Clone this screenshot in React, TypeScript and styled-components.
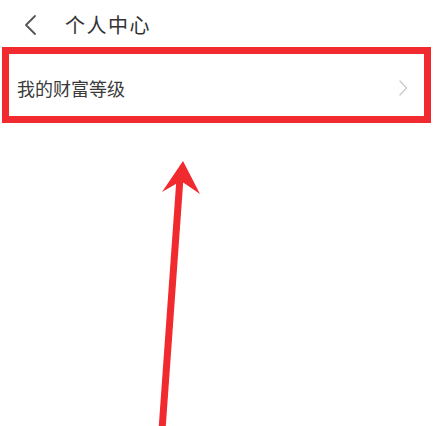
import React from "react";
import styled, { createGlobalStyle } from "styled-components";

const GlobalStyle = createGlobalStyle`
  html, body {
    margin: 0;
    padding: 0;
    background: #ffffff;
  }
  body {
    font-family: "Noto Sans CJK SC", "Noto Sans", sans-serif;
  }
`;

const Page = styled.div`
  position: relative;
  width: 436px;
  height: 426px;
  overflow: hidden;
  background: #ffffff;
`;

const Header = styled.div`
  display: flex;
  align-items: center;
  height: 47px;
  padding: 3px 0 0 24px;
  box-sizing: border-box;
`;

const BackButton = styled.div`
  display: flex;
  align-items: center;
  width: 14px;
  height: 22px;
`;

const Title = styled.div`
  margin-left: 27px;
  font-size: 20px;
  line-height: 24px;
  color: #333333;
  letter-spacing: 1.5px;
`;

const HighlightBox = styled.div`
  margin: 0 5px 0 2px;
  border: 7px solid #f02a2e;
  height: 76px;
  box-sizing: border-box;
  display: flex;
  align-items: center;
  justify-content: space-between;
  padding: 6px 16px 0 8px;
`;

const RowLabel = styled.div`
  font-size: 18px;
  line-height: 22px;
  color: #3a3a3a;
`;

const Chevron = styled.div`
  display: flex;
  align-items: center;
  width: 10px;
  height: 16px;
`;

const ArrowLayer = styled.svg`
  position: absolute;
  left: 0;
  top: 0;
  pointer-events: none;
`;

export default function App() {
  return (
    <>
      <GlobalStyle />
      <Page>
        <Header>
          <BackButton>
            <svg width="14" height="22" viewBox="0 0 14 22">
              <polyline
                points="11,2 2,11 11,20"
                fill="none"
                stroke="#555555"
                strokeWidth="1.8"
                strokeLinecap="round"
                strokeLinejoin="round"
              />
            </svg>
          </BackButton>
          <Title>个人中心</Title>
        </Header>
        <HighlightBox>
          <RowLabel>我的财富等级</RowLabel>
          <Chevron>
            <svg width="10" height="16" viewBox="0 0 10 16">
              <polyline
                points="2,1 8.5,8 2,15"
                fill="none"
                stroke="#cccccc"
                strokeWidth="1.4"
                strokeLinecap="round"
                strokeLinejoin="round"
              />
            </svg>
          </Chevron>
        </HighlightBox>
        <ArrowLayer width="436" height="426" viewBox="0 0 436 426">
          <line
            x1="180"
            y1="178"
            x2="162"
            y2="430"
            stroke="#f02a2e"
            strokeWidth="7"
          />
          <polygon
            points="183,161 200,194 181,181 162,192"
            fill="#f02a2e"
          />
        </ArrowLayer>
      </Page>
    </>
  );
}
